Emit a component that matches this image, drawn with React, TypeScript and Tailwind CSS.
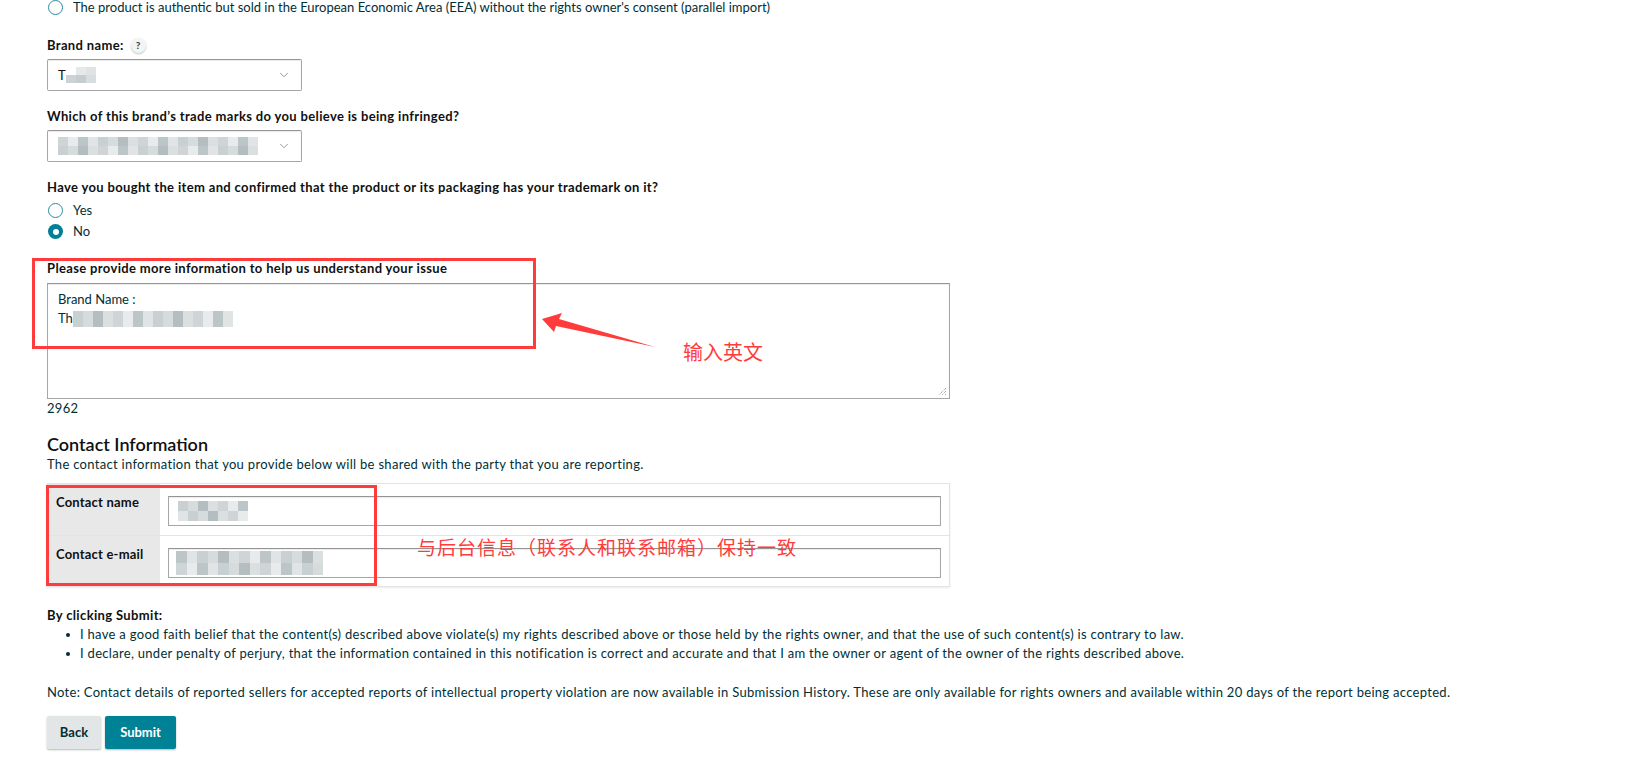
import React from "react";
import { ChevronDown } from "lucide-react";

// gris "floutés" utilisés pour masquer les données
const tons = ["#c9d0d2", "#d6dbdc", "#bcc5c7", "#e0e4e5", "#cfd5d7", "#e8ebec", "#b4bec0", "#dadfe0"];

function mosaique(rows: number, cols: number, seed: number) {
  let s = seed;
  const out: string[][] = [];
  for (let r = 0; r < rows; r++) {
    const row: string[] = [];
    for (let c = 0; c < cols; c++) {
      s = (s * 9301 + 49297) % 233280;
      row.push(tons[s % tons.length]);
    }
    out.push(row);
  }
  return out;
}

const Mosaic = ({ cells, w, h }: { cells: string[][]; w: number; h: number }) => (
  <span className="inline-flex flex-col align-middle">
    {cells.map((row, i) => (
      <span key={i} className="flex">
        {row.map((c, j) => (
          <span key={j} style={{ width: w, height: h, background: c }} />
        ))}
      </span>
    ))}
  </span>
);

const Radio = ({ label, checked }: { label: string; checked?: boolean }) => (
  <div className="flex items-center h-[21px] ml-px gap-[10px]">
    {checked ? (
      <span className="w-[15px] h-[15px] rounded-full bg-[#007f96] flex items-center justify-center">
        <span className="w-[6px] h-[6px] rounded-full bg-white" />
      </span>
    ) : (
      <span className="w-[15px] h-[15px] rounded-full border border-[#2b8c9c] bg-white" />
    )}
    <span>{label}</span>
  </div>
);

const Select = ({ children }: { children: React.ReactNode }) => (
  <div className="mt-[4px] w-[255px] h-[32px] border border-[#a6a6a6] border-t-[#949494] rounded-[2px] shadow-[inset_0_1px_1px_rgba(0,0,0,0.08)] flex items-center pl-[10px] pr-[10px]">
    <div className="flex-1 flex items-center overflow-hidden">{children}</div>
    <ChevronDown size={14} strokeWidth={1.5} className="text-[#8a8a8a]" />
  </div>
);

const Label = ({ children }: { children: React.ReactNode }) => (
  <div className="font-bold text-[13px] tracking-[0.35px] leading-[19px] text-[#0f1111]">{children}</div>
);

export default function App() {
  return (
    <div className="relative min-h-[766px] bg-white pl-[47px] text-[13px] leading-[19px] text-[#002f36] font-[Lato,'Liberation_Sans',sans-serif]">
      {/* derniere option du type d'infraction */}
      <div className="flex items-center h-[14px] ml-px gap-[10px]">
        <span className="w-[15px] h-[15px] rounded-full border border-[#2b8c9c] bg-white" />
        <span>
          The product is authentic but sold in the European Economic Area (EEA) without the rights owner's consent (parallel import)
        </span>
      </div>

      <div className="mt-[22px] flex items-center gap-[7px]">
        <Label>Brand name:</Label>
        <span className="w-[15px] h-[15px] rounded-full bg-[#f3f4f4] shadow-[0_1px_2px_rgba(0,0,0,0.25)] text-[10px] leading-[15px] text-center font-bold text-[#2f3d40]">
          ?
        </span>
      </div>
      <Select>
        <span className="text-[#0f1111]">T</span>
        <Mosaic cells={[["#ffffff", "#e6e9ea", "#dfe3e4"], ["#cdd3d5", "#c6cdcf", "#d9dddf"]]} w={10} h={8} />
      </Select>

      <div className="mt-[16px]">
        <Label>Which of this brand’s trade marks do you believe is being infringed?</Label>
      </div>
      <Select>
        <Mosaic cells={mosaique(2, 20, 7)} w={10} h={9} />
      </Select>

      <div className="mt-[16px]">
        <Label>Have you bought the item and confirmed that the product or its packaging has your trademark on it?</Label>
      </div>
      <div className="mt-[3px]">
        <Radio label="Yes" />
        <Radio label="No" checked />
      </div>

      <div className="mt-[17px]">
        <Label>Please provide more information to help us understand your issue</Label>
      </div>
      <div className="relative mt-[5px] w-[903px] h-[116px] border border-[#a6a6a6] border-t-[#949494] shadow-[inset_0_1px_1px_rgba(0,0,0,0.08)] pt-[6px] pl-[10px]">
        <div>Brand Name :</div>
        <div className="flex items-center">
          <span>Th</span>
          <Mosaic cells={mosaique(2, 16, 3)} w={10} h={8} />
        </div>
        <svg className="absolute right-[2px] bottom-[2px]" width="9" height="9" viewBox="0 0 9 9">
          <path d="M8 1 L1 8 M8 4 L4 8 M8 7 L7 8" stroke="#8a8a8a" strokeWidth="1" strokeDasharray="1 1" />
        </svg>
      </div>
      <div className="tracking-[0.3px]">2962</div>

      <div className="mt-[15px] text-[18px] leading-[23px] font-semibold text-[#0f1111]">Contact Information</div>
      <div className="text-[13px] tracking-[0.3px] leading-[17px]">
        The contact information that you provide below will be shared with the party that you are reporting.
      </div>

      <div className="mt-[10px] w-[903px] border border-[#e3e3e3] shadow-[0_1px_2px_rgba(0,0,0,0.08)]">
        <div className="flex border-b border-[#e3e3e3]">
          <div className="w-[112px] bg-[#e8e8e8] pl-[8px] pt-[10px] font-bold text-[13px] tracking-[0.2px] leading-[16px] text-[#0f1111]">
            Contact name
          </div>
          <div className="flex-1 pl-[8px] pr-[8px] pt-[12px] pb-[9px]">
            <div className="h-[30px] border border-[#a6a6a6] border-t-[#949494] shadow-[inset_0_1px_1px_rgba(0,0,0,0.08)] flex items-center pl-[9px]">
              <Mosaic cells={mosaique(2, 7, 11)} w={10} h={10} />
            </div>
          </div>
        </div>
        <div className="flex">
          <div className="w-[112px] bg-[#e8e8e8] pl-[8px] pt-[10px] font-bold text-[13px] tracking-[0.2px] leading-[16px] text-[#0f1111]">
            Contact e-mail
          </div>
          <div className="flex-1 pl-[8px] pr-[8px] pt-[12px] pb-[8px]">
            <div className="h-[30px] border border-[#a6a6a6] border-t-[#949494] shadow-[inset_0_1px_1px_rgba(0,0,0,0.08)] flex items-center pl-[7px]">
              <Mosaic cells={mosaique(2, 14, 5)} w={10.5} h={12} />
            </div>
          </div>
        </div>
      </div>

      <div className="mt-[19px]">
        <Label>By clicking Submit:</Label>
      </div>
      <ul className="text-[13px] tracking-[0.3px]">
        <li className="flex items-center gap-[10px] ml-[19px]">
          <span className="w-[4px] h-[4px] rounded-full bg-[#002f36]" />
          I have a good faith belief that the content(s) described above violate(s) my rights described above or those held by the rights owner, and that the use of such content(s) is contrary to law.
        </li>
        <li className="flex items-center gap-[10px] ml-[19px]">
          <span className="w-[4px] h-[4px] rounded-full bg-[#002f36]" />
          I declare, under penalty of perjury, that the information contained in this notification is correct and accurate and that I am the owner or agent of the owner of the rights described above.
        </li>
      </ul>

      <div className="mt-[20px] text-[13px] tracking-[0.3px]">
        Note: Contact details of reported sellers for accepted reports of intellectual property violation are now available in Submission History. These are only available for rights owners and available within 20 days of the report being accepted.
      </div>

      <div className="mt-[14px] flex gap-[4px]">
        <button className="w-[54px] h-[33px] bg-[#e3e6e6] rounded-[2px] shadow-[0_1px_2px_rgba(15,17,17,0.3)] font-bold text-[13px] text-[#002f36]">
          Back
        </button>
        <button className="w-[71px] h-[33px] bg-[#008296] rounded-[2px] shadow-[0_1px_2px_rgba(15,17,17,0.3)] font-bold text-[13px] text-white">
          Submit
        </button>
      </div>

      {/* annotations rouges par-dessus la capture */}
      <div className="absolute left-[32px] top-[258px] w-[504px] h-[91px] border-[3px] border-[#ff3b3b]" />
      <div className="absolute left-[46px] top-[485px] w-[331px] h-[101px] border-[3px] border-[#ff3b3b]" />
      <svg className="absolute left-[536px] top-[310px]" width="125" height="45" viewBox="0 0 125 45">
        <polygon points="6,9 26,3 23,9 119,37 20,16 18,22" fill="#ff3b3b" />
      </svg>
      <div className="absolute left-[683px] top-[340px] text-[20px] leading-[24px] text-[#ff3b3b] font-['Noto_Sans_CJK_SC',sans-serif]">
        输入英文
      </div>
      <div className="absolute left-[417px] top-[535px] text-[19px] tracking-[1px] leading-[24px] text-[#ff3b3b] font-['Noto_Sans_CJK_SC',sans-serif]">
        与后台信息（联系人和联系邮箱）保持一致
      </div>
    </div>
  );
}
